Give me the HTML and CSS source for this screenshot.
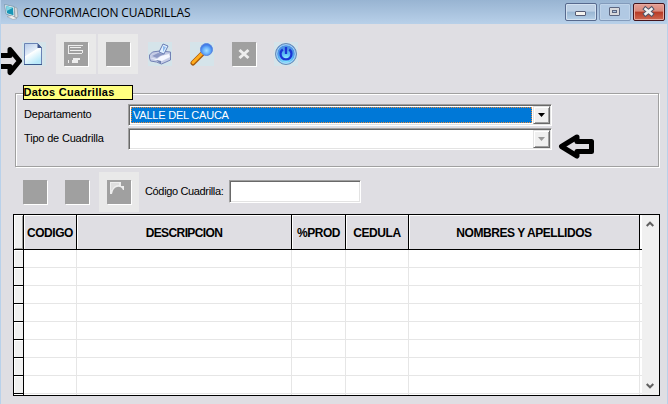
FILE: index.html
```html
<!DOCTYPE html>
<html lang="es">
<head>
<meta charset="utf-8">
<title>CONFORMACION CUADRILLAS</title>
<link rel="stylesheet" href="styles.css">
</head>
<body>
<div class="window">
  <header class="titlebar">
    <svg class="app-icon" width="16" height="16" viewBox="0 0 16 16"><path d="M.5 .5l9.500 2 1 10.500-9-3z" fill="#e9f4f8" stroke="#6f8da0" stroke-width=".7"/><path d="M2 2l7 1.700.5 7.500-6.500-2z" fill="#1795b5"/><path d="M2 2l7 1.700-6.300 3.300z" fill="#83d5e2"/><path d="M10.500 3l2.500 1 1 9-3 1z" fill="#d8dde0" stroke="#8a959c" stroke-width=".6"/><path d="M3 12.500l5-1 5 3-4 1z" fill="#eee" stroke="#8a959c" stroke-width=".5"/></svg>
    <h1>CONFORMACION CUADRILLAS</h1>
    <div class="controls">
      <span class="ctl min"><svg width="32" height="18"><rect x="10.500" y="8.500" width="10" height="4" rx=".5" fill="#f5f3ee" stroke="#555b73"/></svg></span>
      <span class="ctl max"><svg width="32" height="18"><rect x="10.500" y="4.500" width="10" height="8" rx=".5" fill="#d8d9dc" stroke="#5c6680"/><rect x="13.500" y="7.500" width="4" height="2" fill="#a9c2df" stroke="#5c6680"/></svg></span>
      <span class="ctl close"><svg width="32" height="18"><path d="M12.500 6l6 5M18.500 6l-6 5" stroke="#515669" stroke-width="4.500" stroke-linecap="square"/><path d="M12.500 6l6 5M18.500 6l-6 5" stroke="#f1f1f1" stroke-width="2.500" stroke-linecap="square"/></svg></span>
    </div>
  </header>

  <nav class="toolbar">
    <span class="tool"><svg width="24" height="24"><defs><linearGradient id="pg" x1="0" y1="0" x2=".5" y2="1"><stop offset="0" stop-color="#b5c9e8"/><stop offset=".48" stop-color="#e3edf8"/><stop offset=".52" stop-color="#fff"/><stop offset="1" stop-color="#b9e9fa"/></linearGradient></defs><rect width="24" height="24" fill="#d5e4ea"/><path d="M2.500 1.500h13l4 4v17h-17z" fill="url(#pg)" stroke="#6a82b5"/><path d="M15.500 1v5h4.500z" fill="#41598f"/><path d="M2 22.500h18" stroke="#3c588c"/></svg></span>
    <span class="tool raised"><i class="blank"><svg width="24" height="24" fill="none" stroke="#eee" shape-rendering="crispEdges"><path d="M4 3.500h15M4.500 3v9M4 11.500h14M6 5.500h11M6 8.500h12M18.500 8v3M4.500 18v3"/><path d="M9 16h7v2h-2v3H8v-3h1z" fill="#eee" stroke="none"/></svg></i></span>
    <span class="tool raised"><i class="blank"></i></span>
    <span class="tool"><svg width="24" height="24"><rect width="24" height="24" fill="#d5e4ea"/><path d="M1.500 13l3-3 7-1 11 1v8l-9 4-5-2-6-1-1-3z" fill="#c5cce6" stroke="#7381b5"/><path d="M2 16l6 2 6 1 8-4-1-3-8 2-4 3z" fill="#f5f7ff"/><path d="M8 18l5 4v-3z" fill="#6d7fae"/><path d="M4 14l6-3 7 1-5 2-3 2z" fill="#8c98c5"/><path d="M11 10l4-8 5 2-4 8z" fill="#e0f0ff" stroke="#667cb4"/><path d="M15 4l3 1-3 5" fill="#8eb9ed"/></svg></span>
    <span class="tool"><svg width="24" height="24"><defs><radialGradient id="lens" cx=".5" cy=".6"><stop offset="0" stop-color="#a9e2ff"/><stop offset=".6" stop-color="#65aefa"/><stop offset="1" stop-color="#3f7ae8"/></radialGradient></defs><rect width="24" height="24" fill="#d5e4ea"/><path d="M3 21l9-9" stroke="#a95c10" stroke-width="5" stroke-linecap="round"/><path d="M3 20.500l9-9" stroke="#ffad1c" stroke-width="3" stroke-linecap="round"/><circle cx="16.500" cy="7.500" r="6" fill="url(#lens)" stroke="#5c88e0"/></svg></span>
    <span class="tool"><i class="blank"><svg width="24" height="24"><path d="M7.500 8l9 8M16.500 8l-9 8" stroke="#eee" stroke-width="3"/></svg></i></span>
    <span class="tool"><svg width="24" height="24"><defs><radialGradient id="pw" cy=".75"><stop offset="0" stop-color="#9af5ff"/><stop offset=".55" stop-color="#5cbdf6"/><stop offset="1" stop-color="#4c93e4"/></radialGradient></defs><rect width="24" height="24" fill="#d5e4ea"/><circle cx="12" cy="12" r="10.500" fill="url(#pw)" stroke="#6e8cb4"/><circle cx="12" cy="12" r="9.300" fill="none" stroke="#b8dcf7"/><path d="M8.800 7.500a5.500 5.500 0 1 0 6.400 0" fill="none" stroke="#1936d5" stroke-width="2.300"/><path d="M12 5v7" stroke="#1936d5" stroke-width="2.300"/></svg></span>
  </nav>

  <section class="group">
    <h2>Datos Cuadrillas</h2>
    <div class="field"><label class="depto">Departamento</label><div class="combo"><span class="selected"><b class="val">VALLE DEL CAUCA</b></span><span class="drop"><svg width="7" height="4"><path d="M0 0h7L3.500 4z"/></svg></span></div></div>
    <div class="field"><label class="tipo">Tipo de Cuadrilla</label><div class="combo off"><span class="empty"></span><span class="drop"><svg width="7" height="4"><path d="M0 0h7L3.500 4z" fill="#999"/></svg></span></div></div>
  </section>

  <div class="code-row">
    <span class="tool"><i class="blank"></i></span>
    <span class="tool"><i class="blank"></i></span>
    <span class="tool raised"><i class="blank"><svg width="24" height="24"><path d="M3 2h11v4h3v4h-1q-2-4-6-3-4 1-5 7H3z" fill="#eee"/><path d="M4 3h8v2q-5 0-7 5H4z" fill="#dedede"/></svg></i></span>
    <label class="code">Código Cuadrilla:</label>
    <span class="input"></span>
  </div>

  <div class="grid">
    <div class="row head"><span class="sel"></span><span>CODIGO</span><span class="wide">DESCRIPCION</span><span>%PROD</span><span>CEDULA</span><span>NOMBRES Y APELLIDOS</span><span></span></div>
    <div class="row"><span class="sel"></span><span></span><span></span><span></span><span></span><span></span></div>
    <div class="row"><span class="sel"></span><span></span><span></span><span></span><span></span><span></span></div>
    <div class="row"><span class="sel"></span><span></span><span></span><span></span><span></span><span></span></div>
    <div class="row"><span class="sel"></span><span></span><span></span><span></span><span></span><span></span></div>
    <div class="row"><span class="sel"></span><span></span><span></span><span></span><span></span><span></span></div>
    <div class="row"><span class="sel"></span><span></span><span></span><span></span><span></span><span></span></div>
    <div class="row"><span class="sel"></span><span></span><span></span><span></span><span></span><span></span></div>
    <div class="row"><span class="sel"></span><span></span><span></span><span></span><span></span><span></span></div>
    <div class="row last"><span class="sel"></span><span></span><span></span><span></span><span></span><span></span></div>
    <div class="scroll"><svg width="8" height="6"><path d="M.7 5L4 1.700 7.300 5" fill="none" stroke="#606060" stroke-width="2"/></svg><svg width="8" height="6"><path d="M.7 1L4 4.300 7.300 1" fill="none" stroke="#606060" stroke-width="2"/></svg></div>
  </div>

  <svg class="arrow new-arrow" width="24" height="30"><path d="M-4 9.500H10V3.500L19.500 15 10 26.500v-6H-4" fill="#dfdee3" stroke="#000" stroke-width="5" stroke-linejoin="round"/></svg>
  <svg class="arrow combo-arrow" width="38" height="28"><path d="M33.500 8.500H19V4L3.500 13.500 19 23v-4.500h14.500z" fill="#dfdee3" stroke="#000" stroke-width="5" stroke-linejoin="round"/></svg>
</div>
</body>
</html>
```
FILE: styles.css
```css
* { box-sizing: border-box; }
body { margin: 0; }
h1, h2 { margin: 0; }
svg { display: block; }
.window {
  position: relative;
  width: 668px;
  height: 404px;
  overflow: hidden;
  background: #dfdee3;
  border: solid #b9d1ea;
  border-width: 0 1px;
  font: 11px "Liberation Sans", Arial, sans-serif;
  color: #000;
}
.titlebar {
  height: 24px;
  margin: 0 -1px;
  padding: 3px 3px 0 4px;
  display: flex;
  background: linear-gradient(#98b4d2, #b8d0e9);
}
.app-icon { margin-top: 1px; }
.titlebar h1 {
  margin-left: 3px;
  font: 12px/19px "Open Sans", "Noto Sans", sans-serif;
  letter-spacing: -.1px;
  white-space: nowrap;
}
.controls { margin-left: auto; display: flex; gap: 2px; }
.ctl {
  width: 32px;
  height: 18px;
  border: 1px solid #576a8e;
  border-radius: 2px;
  box-shadow: inset 0 0 0 1px #d3e1f0;
  background: linear-gradient(#bdd0e5 45%, #99b6d2 50%, #b6d0e8);
}
.ctl svg { margin: -1px; }
.max { border-color: #839bbb; background: #b1c9e3; box-shadow: inset 0 0 0 1px #bfd3e9; }
.close { border-color: #43141c; background: linear-gradient(#e5a096, #d8897b 45%, #b73a25 50%, #cf6750); box-shadow: inset 0 0 0 1px #e7aaa0; }
.toolbar { display: flex; gap: 2px; padding: 10px 0 0 13px; }
.tool { width: 40px; height: 40px; padding: 8px; flex: none; }
.raised { background: #e9e9e9; }
.blank { display: block; width: 24px; height: 24px; background: #a0a0a0; box-shadow: 1px 1px #fff; }
.group {
  width: 644px;
  height: 74px;
  margin: 19px 0 0 14px;
  border: 1px solid #a0a0a0;
  box-shadow: 1px 1px #fff, inset 1px 1px #fff;
}
.group h2 {
  width: 110px;
  height: 15px;
  margin: -9px 0 4px 7px;
  border: 1px solid #000;
  background: #ffff80;
  font: bold 11px/12px "Liberation Sans", Arial, sans-serif;
  letter-spacing: .27px;
  text-indent: -.5px;
  white-space: nowrap;
}
.field { display: flex; height: 24px; padding-left: 8px; }
.field label { width: 104px; line-height: 20px; letter-spacing: -.18px; white-space: nowrap; }
.combo {
  width: 424px;
  height: 22px;
  display: flex;
  background: #fff;
  border: 1px solid;
  border-color: #a0a0a0 #fff #fff #a0a0a0;
  box-shadow: inset 1px 1px #696969, inset -1px -1px #e3e3e3;
  padding: 1px;
}
.selected { flex: 1; margin: 1px; background: #0078d7; border: 1px dotted #e58b3c; color: #fff; line-height: 15px; }
.val { font-weight: normal; margin-left: 1px; letter-spacing: -.22px; }
.empty { flex: 1; }
.drop {
  width: 17px;
  height: 18px;
  display: flex;
  align-items: center;
  justify-content: center;
  background: #f0f0f0;
  border: 1px solid;
  border-color: #e3e3e3 #696969 #696969 #e3e3e3;
  box-shadow: inset 1px 1px #fff, inset -1px -1px #a0a0a0;
}
.code-row { display: flex; height: 40px; margin-top: 5px; padding-left: 14px; gap: 2px; }
.code { width: 82px; margin-left: 4px; line-height: 38px; letter-spacing: -.35px; white-space: nowrap; }
.input {
  width: 132px;
  height: 23px;
  margin: 8px 0 0;
  background: #fff;
  border: 1px solid;
  border-color: #a0a0a0 #fff #fff #a0a0a0;
  box-shadow: inset 1px 1px #696969, inset -1px -1px #e3e3e3;
}
.grid {
  position: relative;
  width: 647px;
  height: 182px;
  margin: 2px 0 0 12px;
  border: 1px solid #000;
  background: #fff;
  overflow: hidden;
}
.row {
  display: grid;
  grid-template-columns: 10px 53px 215px 54px 63px 231px;
  height: 18px;
  width: 628px;
  background: linear-gradient(#e6e6e6, #e6e6e6) right bottom / 2px 1px no-repeat;
}
.row span { border: solid #e6e6e6; border-width: 0 1px 1px 0; }
.row .sel { border-color: #000; background: #f0f0f0; box-shadow: inset 1px 1px #fff; }
.row.head { grid-template-columns: 10px 53px 215px 54px 63px 231px 2px; height: 35px; }
.head span {
  background: #dfdee3;
  border-color: #000;
  box-shadow: inset 1px 1px #fff;
  height: 35px;
  font: bold 12px/36px "Liberation Sans", Arial, sans-serif;
  letter-spacing: -.45px;
  text-align: center;
  white-space: nowrap;
}
.head .wide { letter-spacing: -.6px; }
.head .sel { box-shadow: inset 1px 1px #fff, inset -1px -1px #a0a0a0; }
.head span:last-child { background: #fff; border-right: 0; }
.row.last { height: 2px; background: none; }
.row.last span { border-bottom: 0; }
.row.last .sel { background: #fff; }
.scroll {
  position: absolute;
  top: 0;
  right: 0;
  width: 17px;
  height: 180px;
  padding: 6px 4px;
  display: flex;
  flex-direction: column;
  justify-content: space-between;
  background: #f0f0f0;
}
.arrow { position: absolute; }
.new-arrow { left: -1px; top: 46px; }
.combo-arrow { left: 557px; top: 133px; }
```
